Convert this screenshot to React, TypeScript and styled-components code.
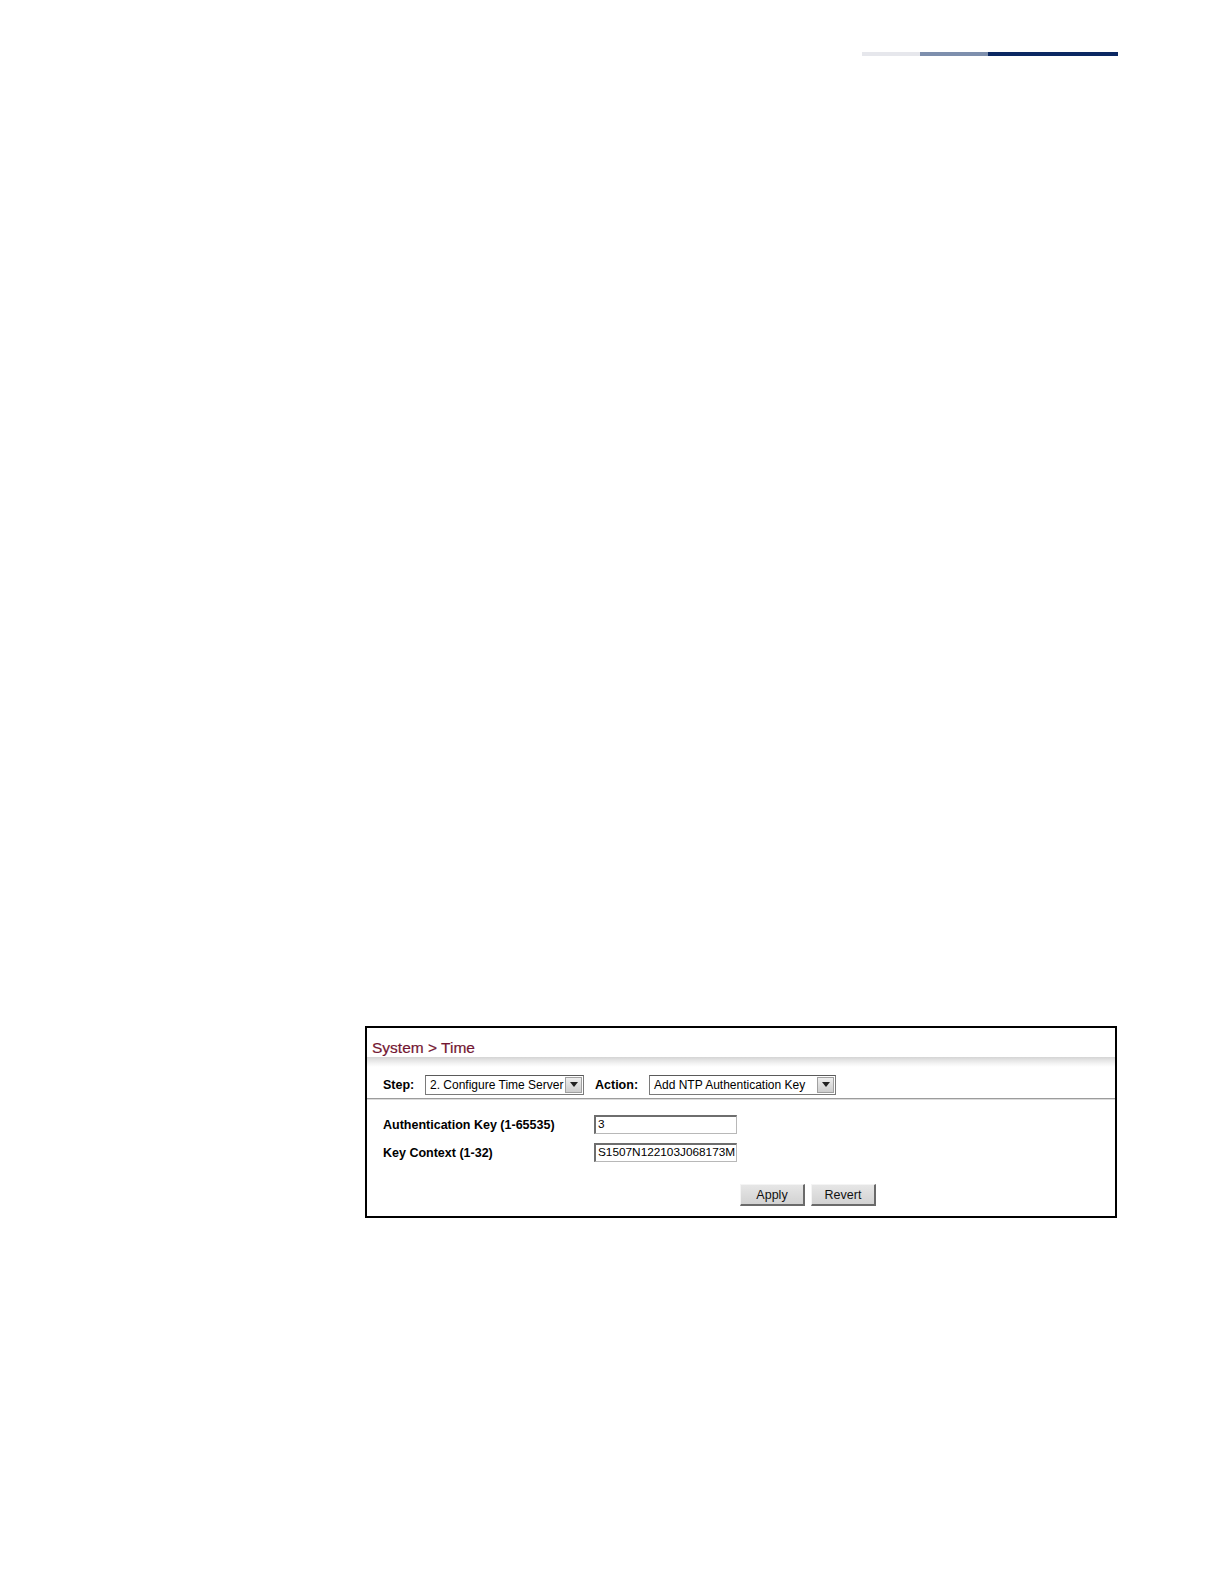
import styled, { createGlobalStyle } from 'styled-components';

const GlobalStyle = createGlobalStyle`
  html, body {
    margin: 0;
    padding: 0;
    background: #ffffff;
  }
  body {
    font-family: "Liberation Sans", Arial, sans-serif;
    color: #000;
  }
`;

const Page = styled.div`
  width: 1224px;
  height: 1584px;
  padding-top: 52px;
  box-sizing: border-box;
`;

const HeaderRule = styled.div`
  display: flex;
  margin-left: 862px;
  width: 256px;
  height: 4px;
`;

const RuleSegment = styled.div<{ $w: number; $color: string }>`
  width: ${(p) => p.$w}px;
  background: ${(p) => p.$color};
`;

const Frame = styled.div`
  margin-top: 970px;
  margin-left: 365px;
  width: 752px;
  height: 192px;
  box-sizing: border-box;
  border: 2px solid #000;
  display: flex;
  flex-direction: column;
`;

const Title = styled.div`
  height: 29px;
  box-sizing: border-box;
  padding: 10px 0 0 5px;
  font-size: 15.5px;
  line-height: 20px;
  color: #731632;
  -webkit-text-stroke: 0.2px #731632;
`;

const Band = styled.div`
  height: 10px;
  background: linear-gradient(to bottom, #d4d4d4 0%, #e6e6e6 35%, #f5f5f5 70%, #ffffff 100%);
`;

const Toolbar = styled.div`
  height: 32px;
  box-sizing: border-box;
  display: flex;
  align-items: center;
  padding: 4px 0 0 16px;
  border-bottom: 1px solid #9c9c9c;
  box-shadow: 0 1px 0 #dcdcdc;
`;

const ToolLabel = styled.span<{ $w: number }>`
  width: ${(p) => p.$w}px;
  font-size: 12.5px;
  font-weight: bold;
`;

const Select = styled.div<{ $w: number }>`
  width: ${(p) => p.$w}px;
  height: 20px;
  box-sizing: border-box;
  border: 1px solid #7a7a7a;
  border-top-color: #5a5a5a;
  display: flex;
  align-items: center;
  font-size: 12px;
  background: #fff;
  margin-right: 11px;
`;

const SelectText = styled.span`
  flex: 1;
  padding-left: 4px;
  white-space: nowrap;
  overflow: hidden;
`;

const SelectArrow = styled.div`
  width: 17px;
  height: 16px;
  margin-right: 1px;
  box-sizing: border-box;
  background: linear-gradient(to bottom, #eeeeee, #cdcdcd);
  border: 1px solid #a0a0a0;
  display: flex;
  align-items: center;
  justify-content: center;
`;

const Form = styled.div`
  display: grid;
  grid-template-columns: 211px 143px;
  row-gap: 9px;
  align-items: center;
  padding: 16px 0 0 16px;
`;

const FieldLabel = styled.span`
  font-size: 12.5px;
  font-weight: bold;
`;

const TextBox = styled.div`
  height: 19px;
  box-sizing: border-box;
  border: 1px solid #b8b8b8;
  border-top: 2px solid #6e6e6e;
  border-left: 2px solid #6e6e6e;
  font-size: 11.8px;
  line-height: 15px;
  padding-left: 2px;
  white-space: nowrap;
  overflow: hidden;
  background: #fff;
`;

const ButtonRow = styled.div`
  display: flex;
  gap: 6px;
  padding: 22px 0 0 373px;
`;

const Button = styled.div`
  width: 65px;
  height: 22px;
  box-sizing: border-box;
  background: linear-gradient(to bottom, #e6e6e6, #d2d2d2);
  border: 1px solid #f4f4f4;
  border-right: 2px solid #6a6a6a;
  border-bottom: 2px solid #6a6a6a;
  font-size: 12.5px;
  display: flex;
  align-items: center;
  justify-content: center;
  color: #111;
`;

function Arrow() {
  return (
    <SelectArrow>
      <svg width="8" height="5" viewBox="0 0 8 5">
        <path d="M0 0 H8 L4 5 Z" fill="#222" />
      </svg>
    </SelectArrow>
  );
}

export default function App() {
  return (
    <>
      <GlobalStyle />
      <Page>
        <HeaderRule>
          <RuleSegment $w={58} $color="#e6e7ec" />
          <RuleSegment $w={68} $color="#7e8fad" />
          <RuleSegment $w={130} $color="#0b2862" />
        </HeaderRule>
        <Frame>
          <Title>System &gt; Time</Title>
          <Band />
          <Toolbar>
            <ToolLabel $w={42}>Step:</ToolLabel>
            <Select $w={159}>
              <SelectText>2. Configure Time Server</SelectText>
              <Arrow />
            </Select>
            <ToolLabel $w={54}>Action:</ToolLabel>
            <Select $w={187}>
              <SelectText>Add NTP Authentication Key</SelectText>
              <Arrow />
            </Select>
          </Toolbar>
          <Form>
            <FieldLabel>Authentication Key (1-65535)</FieldLabel>
            <TextBox>3</TextBox>
            <FieldLabel>Key Context (1-32)</FieldLabel>
            <TextBox>S1507N122103J068173M</TextBox>
          </Form>
          <ButtonRow>
            <Button>Apply</Button>
            <Button>Revert</Button>
          </ButtonRow>
        </Frame>
      </Page>
    </>
  );
}
